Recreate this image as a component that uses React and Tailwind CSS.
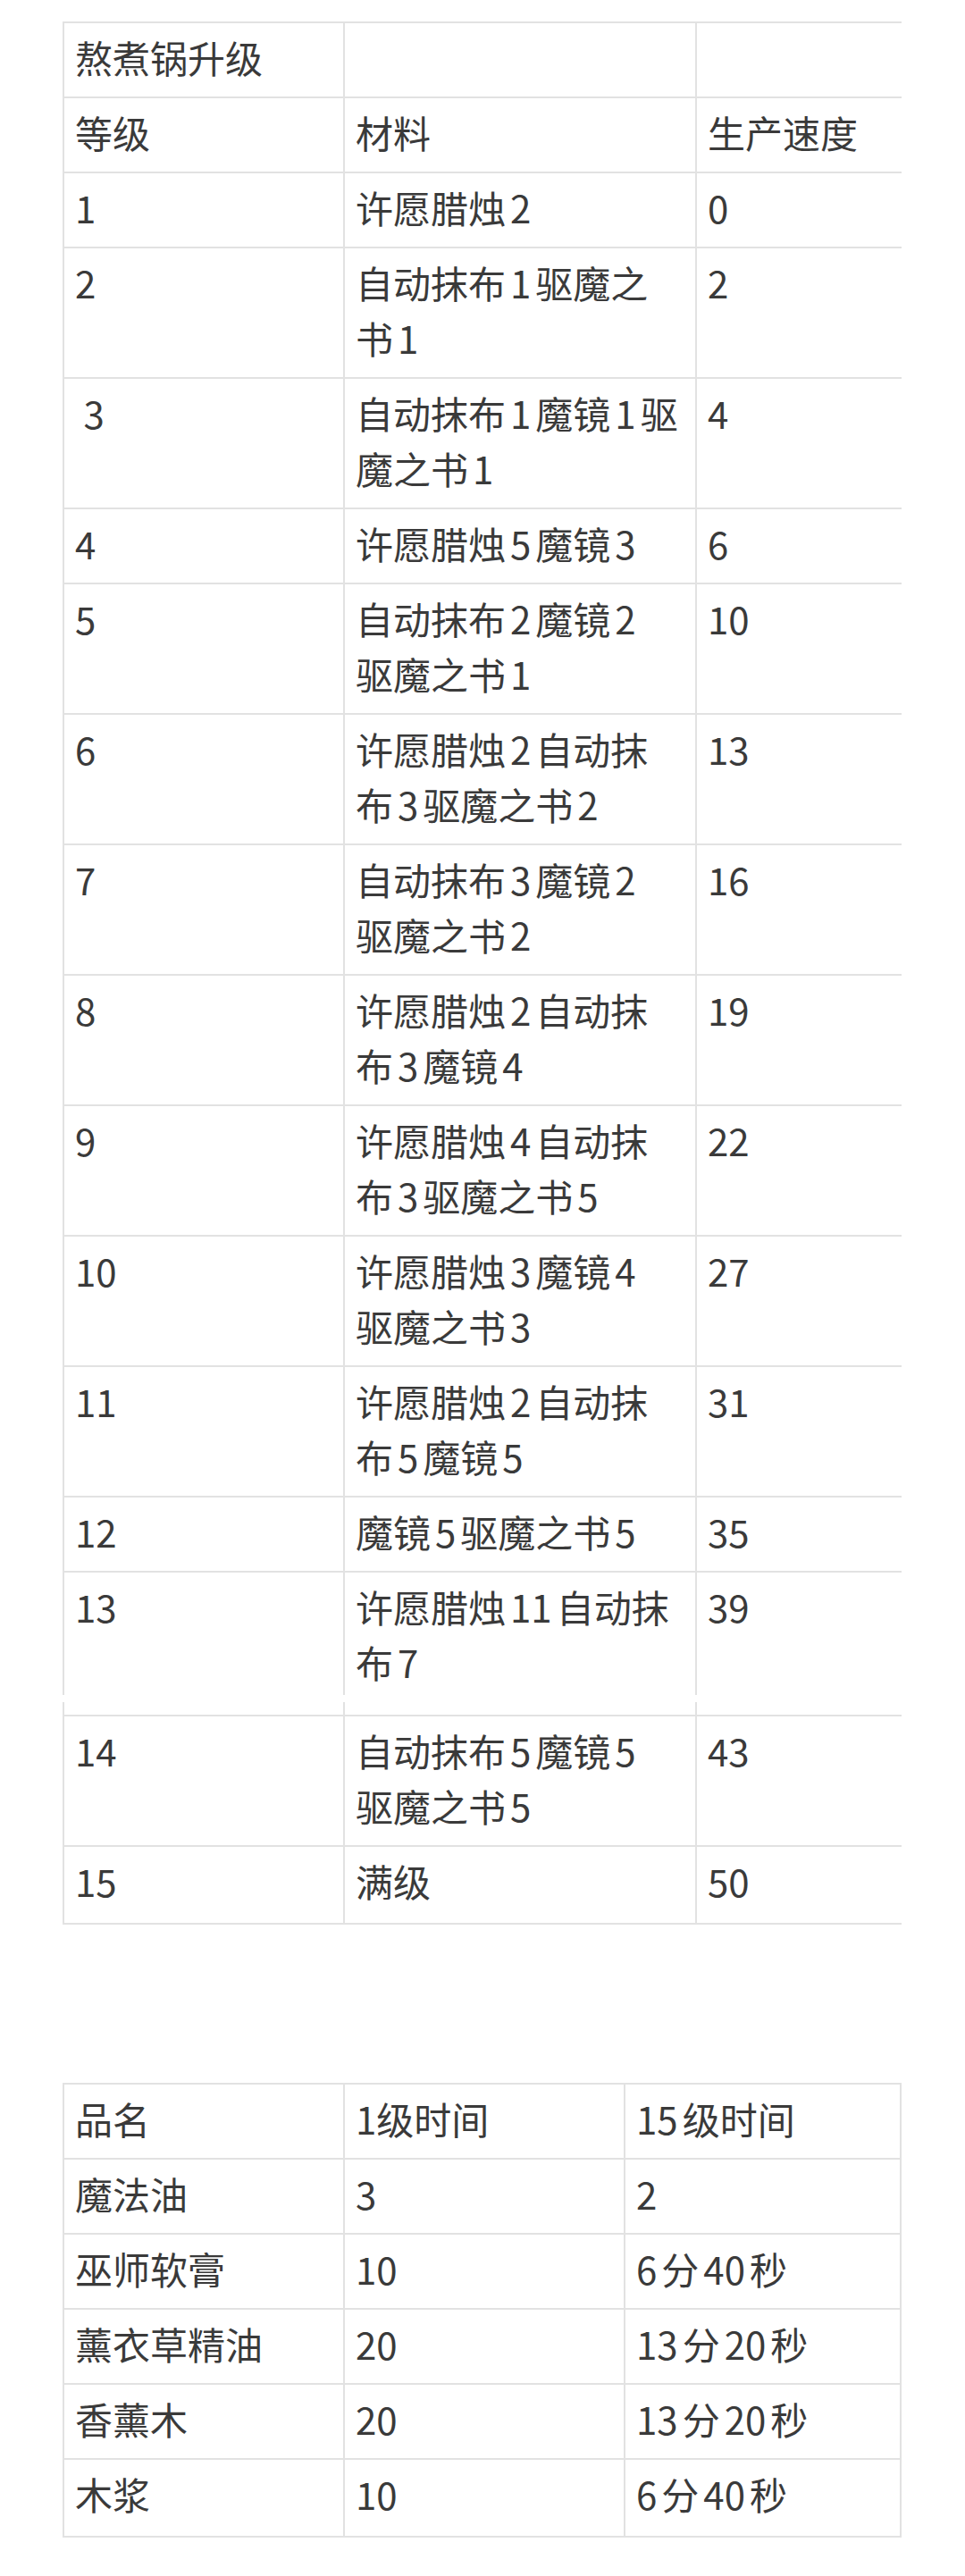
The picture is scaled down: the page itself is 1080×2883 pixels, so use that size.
import React from "react";

const upgradeRows = [
  { level: "1", mats: ["许愿腊烛2"], speed: "0" },
  { level: "2", mats: ["自动抹布1驱魔之", "书1"], speed: "2" },
  { level: "\u00a03", mats: ["自动抹布1魔镜1驱", "魔之书1"], speed: "4" },
  { level: "4", mats: ["许愿腊烛5魔镜3"], speed: "6" },
  { level: "5", mats: ["自动抹布2魔镜2", "驱魔之书1"], speed: "10" },
  { level: "6", mats: ["许愿腊烛2自动抹", "布3驱魔之书2"], speed: "13" },
  { level: "7", mats: ["自动抹布3魔镜2", "驱魔之书2"], speed: "16" },
  { level: "8", mats: ["许愿腊烛2自动抹", "布3魔镜4"], speed: "19" },
  { level: "9", mats: ["许愿腊烛4自动抹", "布3驱魔之书5"], speed: "22" },
  { level: "10", mats: ["许愿腊烛3魔镜4", "驱魔之书3"], speed: "27" },
  { level: "11", mats: ["许愿腊烛2自动抹", "布5魔镜5"], speed: "31" },
  { level: "12", mats: ["魔镜5驱魔之书5"], speed: "35" },
  { level: "13", mats: ["许愿腊烛11自动抹", "布7"], speed: "39", tall: true },
  { level: "14", mats: ["自动抹布5魔镜5", "驱魔之书5"], speed: "43" },
  { level: "15", mats: ["满级"], speed: "50", last: true },
];

const timeRows = [
  ["魔法油", "3", "2"],
  ["巫师软膏", "10", "6分40秒"],
  ["薰衣草精油", "20", "13分20秒"],
  ["香薰木", "20", "13分20秒"],
  ["木浆", "10", "6分40秒"],
];

// digits between CJK get a little breathing room, like the phone renders it
const Spaced = ({ text }) => {
  const parts = text.split(/(\d+)/);
  return parts.map((p, i) => {
    if (!/^\d+$/.test(p)) return p;
    if (i === 1 && parts[0] === "") {
      return (
        <span key={i} className="mr-[5px]">
          {p}
        </span>
      );
    }
    return (
      <span key={i} className="mx-[5px]">
        {p}
      </span>
    );
  });
};

const Lines = ({ lines }) =>
  lines.map((l, i) => (
    <React.Fragment key={i}>
      {i > 0 && <br />}
      <Spaced text={l} />
    </React.Fragment>
  ));

const cell =
  "border-2 border-[#e2e2e2] pl-[12px] pr-[12px] pt-[7px] pb-[13px] align-top whitespace-nowrap";
const tallCell =
  "border-2 border-[#e2e2e2] pl-[12px] pr-[12px] pt-[7px] pb-[28px] align-top whitespace-nowrap";
const lastCell =
  "border-2 border-[#e2e2e2] pl-[12px] pr-[12px] pt-[7px] pb-[16px] align-top whitespace-nowrap";

export default function App() {
  return (
    <div className="bg-white min-h-[2883px] pt-[24px] font-['Noto_Sans_CJK_SC','Noto_Sans',sans-serif] text-[42px] leading-[62px] text-[#3a3a3a]">
      {/* upgrade table, wider than the screen so the last column is cut */}
      <div className="ml-[70px] mr-[71px] overflow-hidden relative">
        <table className="border-collapse table-fixed w-[1010px]">
          <colgroup>
            <col className="w-[314px]" />
            <col className="w-[394px]" />
            <col className="w-[302px]" />
          </colgroup>
          <tbody>
            <tr>
              <td className={cell}>熬煮锅升级</td>
              <td className={cell}></td>
              <td className={cell}></td>
            </tr>
            <tr>
              <td className={cell}>等级</td>
              <td className={cell}>材料</td>
              <td className={cell}>生产速度</td>
            </tr>
            {upgradeRows.map((r) => {
              const pad = r.tall ? tallCell : r.last ? lastCell : cell;
              return (
                <tr key={r.level}>
                  <td className={pad}>{r.level}</td>
                  <td className={pad}>
                    <Lines lines={r.mats} />
                  </td>
                  <td className={pad}>{r.speed}</td>
                </tr>
              );
            })}
          </tbody>
        </table>
        {/* seam where the long screenshot was stitched */}
        <div className="absolute left-0 right-0 top-[1873px] h-[8px] bg-white" />
      </div>

      <div className="ml-[70px] mr-[71px] mt-[177px]">
        <table className="border-collapse table-fixed w-full">
          <colgroup>
            <col className="w-[314px]" />
            <col className="w-[314px]" />
            <col />
          </colgroup>
          <tbody>
            <tr>
              <td className={cell}>品名</td>
              <td className={cell}>1级时间</td>
              <td className={cell}>
                <Spaced text="15级时间" />
              </td>
            </tr>
            {timeRows.map((r, i) => {
              const pad = i === timeRows.length - 1 ? lastCell : cell;
              return (
                <tr key={r[0]}>
                  <td className={pad}>{r[0]}</td>
                  <td className={pad}>{r[1]}</td>
                  <td className={pad}>
                    <Spaced text={r[2]} />
                  </td>
                </tr>
              );
            })}
          </tbody>
        </table>
      </div>
    </div>
  );
}
